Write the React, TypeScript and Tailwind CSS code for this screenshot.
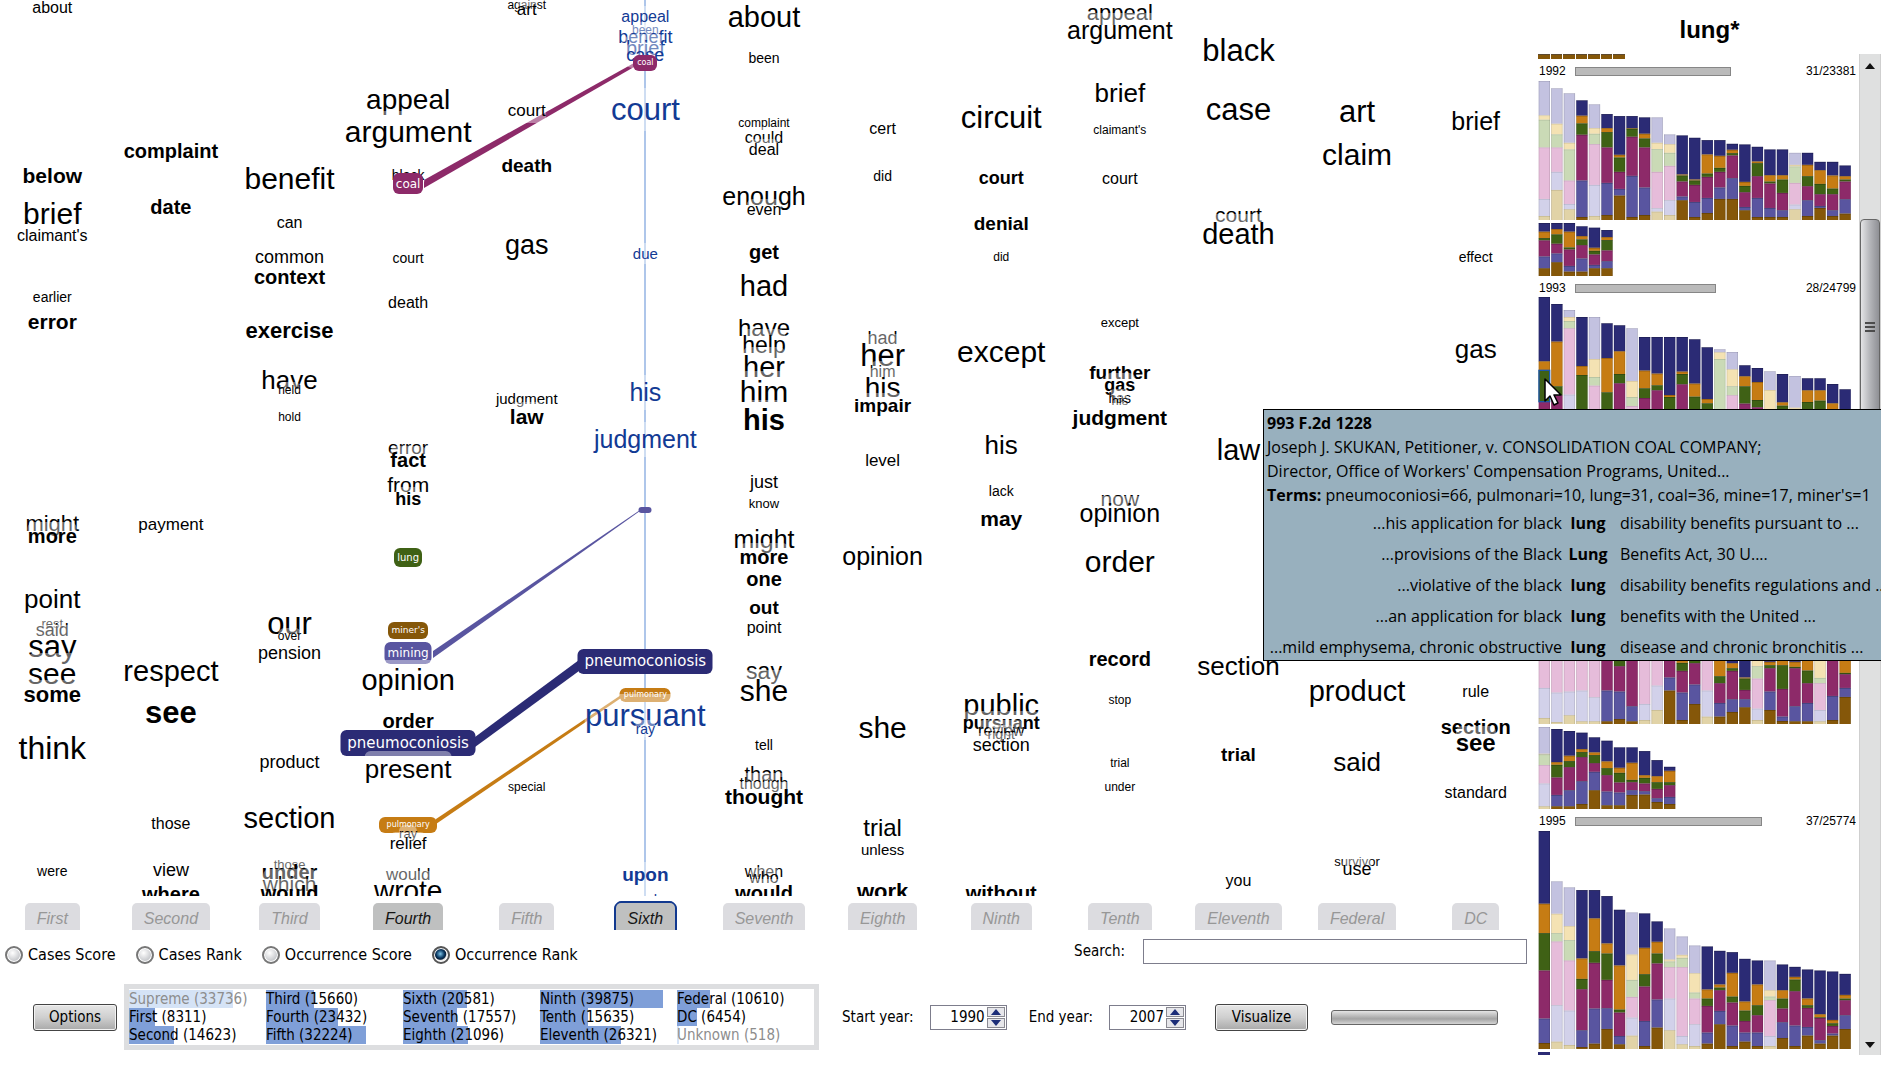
import React, { useState } from "react";

/* ---------- word columns ---------- */

type Word = { t: string; y: number; s: number; b?: boolean };
type Pill = { t: string; pill: string; y: number; w: number; h: number; s: number };
type Item = Word | Pill;

const w = (t: string, y: number, s: number): Word => ({ t, y, s });
const b = (t: string, y: number, s: number): Word => ({ t, y, s, b: true });
const p = (t: string, pill: string, y: number, wd: number, h: number, s: number): Pill => ({ t, pill, y, w: wd, h, s });

const MAGENTA = "bg-[#8d2a69]";
const GREEN = "bg-[#3f6115]";
const BROWN = "bg-[#855709]";
const VIOLET = "bg-[#5955a0]";
const NAVY = "bg-[#2b2b75]";
const ORANGE = "bg-[#c67c14]";

const columns: { name: string; state?: "on" | "active"; items: Item[] }[] = [
  {
    name: "First",
    items: [
      w("about", 13, 16), b("below", 183, 21), w("brief", 224, 30), w("claimant's", 241, 16), w("earlier", 302, 14),
      b("error", 329, 21), w("might", 532, 22), b("more", 543, 20), w("point", 608, 26), w("rest", 628, 13),
      w("said", 636, 18), w("say", 658, 31), w("see", 684, 30), b("some", 703, 22), w("think", 760, 32), w("were", 876, 14),
    ],
  },
  {
    name: "Second",
    items: [
      b("complaint", 158, 20), b("date", 214, 20), w("payment", 530, 17), w("respect", 681, 29), b("see", 724, 31),
      w("those", 829, 16), w("view", 876, 18), b("where", 901, 20),
    ],
  },
  {
    name: "Third",
    items: [
      w("benefit", 189, 30), w("can", 228, 16), w("common", 263, 18), b("context", 284, 20), b("exercise", 339, 22),
      w("have", 389, 26), w("held", 394, 12), w("hold", 421, 12), w("our", 635, 31), w("over", 640, 12),
      w("pension", 659, 18), w("product", 768, 18), w("section", 828, 29), w("those", 869, 13), b("under", 879, 20),
      w("which", 891, 21), b("would", 900, 20),
    ],
  },
  {
    name: "Fourth",
    state: "on",
    items: [
      w("appeal", 109, 28), w("argument", 142, 30), w("black", 180, 14), p("coal", MAGENTA, 173, 30, 21, 12),
      w("court", 263, 14), w("death", 308, 16), w("error", 455, 19), b("fact", 467, 20), w("from", 492, 21),
      b("his", 505, 18), p("lung", GREEN, 548, 28, 19, 10), p("miner's", BROWN, 622, 40, 17, 9),
      p("mining", VIOLET, 642, 47, 22, 12), w("opinion", 690, 29), b("order", 728, 20),
      p("pneumoconiosis", NAVY, 730, 135, 26, 15), w("present", 778, 26), p("pulmonary", ORANGE, 817, 58, 16, 8),
      w("ray", 838, 13), w("relief", 849, 17), w("would", 880, 17), w("wrote", 900, 28),
    ],
  },
  {
    name: "Fifth",
    items: [
      w("against", 9, 12), w("art", 15, 17), w("court", 116, 17), b("death", 173, 19), w("gas", 255, 27),
      w("judgment", 403, 15), b("law", 424, 21), w("special", 791, 12),
    ],
  },
  {
    name: "Sixth",
    state: "active",
    items: [
      w("appeal", 22, 16), w("been", 34, 12), w("benefit", 43, 18), w("brief", 55, 20), w("case", 61, 18),
      p("coal", MAGENTA, 55, 24, 16, 8), w("court", 121, 31), w("due", 258, 15), w("his", 401, 25),
      w("judgment", 448, 25), p("", VIOLET, 507, 13, 6, 8), p("pneumoconiosis", NAVY, 649, 135, 25, 15),
      p("pulmonary", ORANGE, 688, 51, 14, 8), w("pursuant", 727, 31), w("ray", 734, 14), b("upon", 882, 19),
      w("work", 904, 15),
    ],
  },
  {
    name: "Seventh",
    items: [
      w("about", 27, 29), w("been", 63, 14), w("complaint", 127, 12), w("could", 143, 16), w("deal", 155, 16),
      w("enough", 205, 25), w("even", 215, 16), b("get", 259, 20), w("had", 296, 29), w("have", 336, 24),
      w("help", 353, 23), w("her", 377, 29), w("him", 402, 30), b("his", 430, 29), w("just", 488, 18),
      w("know", 508, 13), w("might", 548, 25), b("more", 564, 20), b("one", 586, 20), b("out", 615, 19),
      w("point", 633, 16), w("say", 679, 23), w("she", 701, 30), w("tell", 750, 14), w("than", 781, 20),
      w("though", 789, 16), b("thought", 804, 21), w("when", 877, 16), w("who", 883, 16), b("would", 900, 20),
    ],
  },
  {
    name: "Eighth",
    items: [
      w("cert", 134, 16), w("did", 181, 14), w("had", 344, 18), w("her", 367, 31), w("him", 377, 16), w("his", 397, 28),
      b("impair", 413, 19), w("level", 466, 17), w("opinion", 565, 25), w("she", 738, 30), w("trial", 836, 24),
      w("unless", 854, 15), b("work", 900, 22),
    ],
  },
  {
    name: "Ninth",
    items: [
      w("circuit", 129, 31), b("court", 184, 18), b("denial", 231, 19), w("did", 261, 12), w("except", 362, 30),
      w("his", 454, 26), w("lack", 496, 14), b("may", 526, 21), w("public", 715, 29), b("pursuant", 729, 18),
      w("review", 736, 16), w("right", 739, 14), w("section", 751, 18), b("without", 900, 20),
    ],
  },
  {
    name: "Tenth",
    items: [
      w("appeal", 21, 22), w("argument", 39, 25), w("brief", 102, 26), w("claimant's", 134, 12), w("court", 184, 16),
      w("except", 327, 13), b("further", 380, 19), b("gas", 391, 18), w("has", 403, 14), w("his", 405, 13),
      b("judgment", 425, 21), w("now", 506, 21), w("opinion", 522, 25), w("order", 572, 30), b("record", 666, 20),
      w("stop", 704, 12), w("trial", 767, 12), w("under", 791, 12),
    ],
  },
  {
    name: "Eleventh",
    items: [
      w("black", 62, 31), w("case", 121, 31), w("court", 222, 21), w("death", 244, 29), w("law", 460, 29),
      w("section", 675, 26), b("trial", 762, 19), w("you", 886, 16),
    ],
  },
  {
    name: "Federal",
    items: [
      w("art", 123, 31), w("claim", 165, 30), w("product", 701, 29), w("said", 771, 26), w("survivor", 866, 13),
      w("use", 875, 18),
    ],
  },
  {
    name: "DC",
    items: [
      w("brief", 130, 25), w("effect", 262, 14), w("gas", 358, 26), w("rule", 697, 16), b("section", 734, 20),
      b("see", 751, 24), w("standard", 798, 16),
    ],
  },
];

function CloudItem({ item, blue }: { item: Item; blue: boolean }) {
  if ("pill" in item) {
    return (
      <span
        className={`absolute left-1/2 flex -translate-x-1/2 items-center justify-center rounded-md font-['DejaVu_Sans'] leading-none text-white ${item.pill}`}
        style={{ top: item.y, width: item.w, height: item.h, fontSize: item.s }}
      >
        {item.t}
      </span>
    );
  }
  const lead = item.s <= 18 ? 1 : 0;
  return (
    <span
      className={`absolute left-1/2 -translate-x-1/2 rounded-md bg-white/40 leading-[1.4] ${item.b ? "font-bold" : ""} ${blue ? "text-[#123a94]" : "text-black"}`}
      style={{ top: Math.round(item.y - item.s * 1.05) + lead, fontSize: item.s }}
    >
      {item.t}
    </span>
  );
}

function Connections() {
  return (
    <svg className="absolute inset-0 h-full w-full" viewBox="0 0 1542 896" preserveAspectRatio="none" aria-hidden="true">
      <rect x="651" y="0" width="2" height="896" fill="#aec6ea" />
      <polygon points="431,180 641,63 641,67 431,188" fill="#8d2a69" />
      <polygon points="440,651 647,510 647,511 440,658" fill="#5955a0" />
      <polygon points="482,737 586,660 586,671 482,747" fill="#2b2b75" />
      <polygon points="443,819 628,695 628,698 443,824" fill="#c67c14" />
    </svg>
  );
}

const tabStyle = {
  off: "bg-[#dcdce0] text-[#979797]",
  on: "bg-[#bfc0c0] text-[#151515]",
  active: "bg-[#bfc0c0] text-[#151515] shadow-[-2px_0_0_#12398f,2px_0_0_#12398f,0_-2px_0_#12398f,-1px_-1px_0_#12398f,1px_-1px_0_#12398f]",
};

/* ---------- bar charts ---------- */

type Bar = number[];
const F = 1;
const S = 0;

const solid = ["#2b2b75", "#c67c14", "#3f6115", "#8d2a69", "#5955a0", "#855709"];
const faint = ["#c3c2e0", "#f4e2b3", "#cadab6", "#e6bcda", "#d2d1ea", "#e1d3a7"];

/* Each bar: [faint?, tops of the six segments], three units to a pixel. */
const y1992a: Bar[] = [
  [F, 242, 345, 358, 441, 595, 646], [F, 264, 370, 402, 441, 514, 568], [F, 279, 427, 447, 540, 610, 626],
  [S, 300, 346, 369, 403, 540, 649], [F, 312, 383, 400, 431, 553, 646], [S, 341, 383, 395, 441, 547, 643],
  [S, 347, 463, 471, 514, 565, 585], [S, 347, 383, 385, 409, 526, 649], [S, 351, 400, 414, 441, 561, 643],
  [F, 351, 427, 446, 514, 623, 633], [F, 402, 431, 457, 496, 599, 643], [S, 405, 522, 525, 543, 588, 599],
  [S, 412, 537, 540, 553, 604, 649], [S, 419, 462, 519, 529, 592, 637], [S, 419, 466, 502, 514, 561, 595],
  [S, 430, 448, 458, 465, 533, 595], [S, 432, 544, 556, 575, 619, 629], [S, 439, 483, 488, 527, 592, 649],
  [S, 447, 524, 543, 549, 622, 649], [S, 447, 524, 537, 577, 629, 649], [F, 457, 493, 498, 547, 612, 626],
  [S, 457, 493, 527, 557, 599, 646], [S, 484, 509, 550, 581, 616, 622], [S, 484, 525, 564, 581, 629, 646],
  [S, 495, 527, 537, 543, 596, 639],
];
const y1992b: Bar[] = [
  [S, 669, 695, 714, 721, 769, 804], [S, 669, 687, 703, 731, 760, 786], [S, 669, 695, 742, 748, 797, 814],
  [S, 679, 708, 718, 735, 775, 814], [S, 683, 743, 752, 763, 794, 804], [S, 690, 711, 720, 751, 783, 804],
];
const y1993a: Bar[] = [
  [S, 891, 1084, 1110, 1204, 1290, 1350], [S, 912, 1025, 1159, 1186, 1290, 1350], [F, 930, 951, 963, 985, 1184, 1350],
  [S, 951, 1098, 1125, 1240, 1300, 1350], [F, 951, 1077, 1131, 1157, 1290, 1350], [S, 970, 1074, 1177, 1240, 1300, 1350],
  [S, 976, 1054, 1122, 1150, 1290, 1350], [F, 985, 1143, 1191, 1218, 1290, 1350], [S, 1011, 1112, 1165, 1194, 1290, 1350],
  [S, 1011, 1121, 1156, 1171, 1290, 1350], [S, 1011, 1185, 1191, 1240, 1300, 1350], [S, 1011, 1115, 1122, 1153, 1290, 1350],
  [S, 1018, 1151, 1190, 1240, 1300, 1350], [S, 1042, 1197, 1210, 1240, 1300, 1350], [F, 1048, 1057, 1077, 1240, 1300, 1350],
  [F, 1056, 1108, 1159, 1186, 1290, 1350], [S, 1096, 1129, 1159, 1211, 1290, 1350], [S, 1104, 1146, 1200, 1222, 1290, 1350],
  [F, 1114, 1170, 1240, 1260, 1300, 1350], [S, 1122, 1207, 1217, 1240, 1300, 1350], [F, 1128, 1223, 1240, 1260, 1300, 1350],
  [S, 1135, 1171, 1206, 1240, 1300, 1350], [S, 1135, 1171, 1202, 1240, 1300, 1350], [S, 1152, 1210, 1240, 1260, 1300, 1350],
  [S, 1168, 1240, 1250, 1270, 1300, 1350],
];
const y1993b: Bar[] = [
  [S, 0, 30, 50, 70, 110, 130], [S, 10, 40, 60, 80, 110, 130], [S, 20, 50, 60, 80, 110, 130],
];
const y1994a: Bar[] = [
  [F, 0, 140, 200, 250, 470, 560], [F, 20, 140, 200, 250, 484, 572], [F, 40, 140, 200, 250, 481, 552],
  [F, 50, 140, 200, 250, 478, 570], [F, 60, 140, 200, 250, 498, 570], [S, 80, 200, 250, 300, 478, 570],
  [S, 90, 200, 250, 405, 481, 563], [S, 100, 200, 250, 300, 525, 570], [F, 110, 200, 250, 300, 518, 566],
  [F, 120, 200, 250, 300, 463, 536], [S, 130, 200, 250, 300, 439, 478], [S, 140, 200, 395, 419, 484, 566],
  [S, 150, 200, 385, 396, 460, 518], [F, 160, 200, 250, 300, 478, 556], [S, 170, 250, 435, 456, 515, 556],
  [S, 180, 396, 411, 419, 504, 542], [S, 190, 439, 442, 476, 504, 528], [F, 200, 300, 405, 442, 532, 566],
  [S, 210, 392, 402, 411, 481, 536], [S, 220, 300, 402, 473, 556, 569], [S, 230, 392, 407, 411, 525, 570],
  [S, 240, 300, 418, 456, 515, 570], [F, 250, 300, 440, 456, 536, 570], [S, 260, 290, 320, 350, 494, 566],
  [S, 270, 300, 425, 429, 470, 497],
];
const y1994b: Bar[] = [
  [F, 232, 312, 314, 346, 401, 469], [S, 238, 337, 345, 383, 435, 469], [S, 244, 318, 334, 352, 421, 469],
  [S, 249, 298, 307, 322, 394, 462], [S, 263, 308, 316, 340, 366, 421], [S, 273, 335, 355, 376, 425, 466],
  [S, 293, 354, 369, 398, 428, 466], [S, 293, 339, 390, 397, 421, 435], [S, 304, 376, 384, 401, 424, 434],
  [S, 331, 379, 397, 417, 445, 456], [S, 351, 363, 397, 406, 441, 462],
];
const y1995a: Bar[] = [
  [S, 543, 761, 849, 961, 1105, 1178], [F, 694, 791, 849, 874, 1065, 1174], [F, 712, 828, 870, 931, 1081, 1184],
  [S, 720, 925, 986, 1017, 1140, 1190], [S, 720, 805, 903, 938, 1075, 1180], [S, 738, 880, 910, 989, 1074, 1136],
  [S, 779, 946, 1078, 1087, 1157, 1182], [F, 787, 913, 989, 1040, 1102, 1156], [S, 790, 893, 972, 1009, 1112, 1187],
  [S, 814, 875, 910, 940, 1048, 1132], [F, 835, 928, 934, 951, 1045, 1140], [F, 859, 914, 923, 951, 1157, 1182],
  [F, 886, 969, 1027, 1045, 1122, 1187], [S, 889, 1018, 1045, 1067, 1147, 1180], [S, 902, 1003, 1012, 1020, 1082, 1122],
  [S, 906, 968, 1039, 1057, 1126, 1187], [S, 926, 1054, 1081, 1112, 1147, 1174], [S, 931, 1003, 1065, 1095, 1147, 1187],
  [F, 931, 1020, 1039, 1050, 1157, 1187], [S, 943, 1020, 1045, 1075, 1116, 1163], [S, 950, 980, 988, 1023, 1126, 1187],
  [S, 958, 1045, 1065, 1073, 1130, 1156], [S, 961, 1092, 1101, 1103, 1170, 1180], [S, 964, 1109, 1119, 1127, 1150, 1156],
  [S, 971, 1034, 1045, 1050, 1095, 1136],
];

function Bars({ bars, base, top, className, marked }: { bars: Bar[]; base: number; top: number; className: string; marked?: boolean }) {
  return (
    <svg className={`block w-[314px] shrink-0 ${className}`} viewBox={`0 0 942 ${base - top}`} preserveAspectRatio="none" role="img" aria-label="Cases by term">
      {bars.map((bar, i) => {
        const colours = bar[0] === F ? faint : solid;
        const x = 2 + i * 37.6;
        return (
          <g key={i}>
            {colours.map((c, k) => {
              const y0 = bar[k + 1] - top;
              const y1 = (k === 5 ? base : bar[k + 2]) - top;
              return <rect key={k} x={x} y={y0} width="34" height={Math.max(0, y1 - y0)} fill={c} />;
            })}
            {bar.slice(1).map((y, k) => (
              <rect key={k} x={x} y={y - top} width="34" height="2" fill="#000" opacity={bar[0] === F ? 0.14 : 0.3} />
            ))}
            <rect x={x} y={bar[1] - top} width="2" height={base - bar[1]} fill="#000" opacity="0.15" />
            <rect x={x + 32} y={bar[1] - top} width="2" height={base - bar[1]} fill="#000" opacity="0.15" />
          </g>
        );
      })}
      {marked && <rect x="3" y="220" width="32" height="94" fill="none" stroke="#1c55a8" strokeWidth="4" />}
    </svg>
  );
}

function YearRow({ year, count, bar }: { year: string; count: string; bar: string }) {
  return (
    <div className="flex h-[9px] w-[318px] shrink-0 items-center text-xs leading-[9px] text-black">
      <span className="w-[37px] pl-px">{year}</span>
      <span className={`h-[9px] border border-[#868686] bg-[#bababa] ${bar}`} />
      <span className="ml-auto">{count}</span>
    </div>
  );
}

const snippets = [
  ["...his application for black", "lung", "disability benefits pursuant to ..."],
  ["...provisions of the Black", "Lung", "Benefits Act, 30 U...."],
  ["...violative of the black", "lung", "disability benefits regulations and ..."],
  ["...an application for black", "lung", "benefits with the United ..."],
  ["...mild emphysema, chronic obstructive", "lung", "disease and chronic bronchitis ..."],
];

function CaseTooltip() {
  return (
    <div
      role="tooltip"
      className="absolute top-[355px] right-0 -left-[275px] h-[252px] overflow-hidden border-y border-l border-black bg-[#98b0be] pl-[3px] font-['Open_Sans','Noto_Sans',sans-serif] text-base leading-6 whitespace-nowrap text-black"
    >
      <p className="pt-px font-bold">993 F.2d 1228</p>
      <p>Joseph J. SKUKAN, Petitioner, v. CONSOLIDATION COAL COMPANY;</p>
      <p>Director, Office of Workers' Compensation Programs, United...</p>
      <p>
        <b>Terms:</b> pneumoconiosi=66, pulmonari=10, lung=31, coal=36, mine=17, miner's=1
      </p>
      <ul>
        {snippets.map(([left, term, right]) => (
          <li key={left} className="flex h-[31px] items-center">
            <span className="flex w-[295px] shrink-0 justify-end">{left}</span>
            <b className="w-[52px] shrink-0 text-center">{term}</b>
            <span className="pl-[6px]">{right}</span>
          </li>
        ))}
      </ul>
    </div>
  );
}

function ScrollBar() {
  return (
    <div className="ml-auto flex w-[22px] flex-col items-center border-x border-[#cfcfcf] bg-[#dfe0e0]">
      <button type="button" aria-label="Scroll up" className="flex h-6 w-full shrink-0 items-center justify-center">
        <svg viewBox="0 0 10 6" className="h-[6px] w-[10px]"><path d="M0 6 5 0l5 6z" fill="#111" /></svg>
      </button>
      <div className="flex w-full grow flex-col pt-[141px]">
        <div className="flex h-[216px] w-full flex-col items-center justify-center gap-[2px] rounded-sm border border-[#666] bg-linear-to-r from-[#e4e4e6] via-[#b4b5b9] to-[#8f9095]">
          <span className="h-[2px] w-[10px] bg-[#4c4c4c]" />
          <span className="h-[2px] w-[10px] bg-[#4c4c4c]" />
          <span className="h-[2px] w-[10px] bg-[#4c4c4c]" />
        </div>
      </div>
      <button type="button" aria-label="Scroll down" className="flex h-5 w-full shrink-0 items-center justify-center">
        <svg viewBox="0 0 10 6" className="h-[6px] w-[10px]"><path d="M0 0h10L5 6z" fill="#111" /></svg>
      </button>
    </div>
  );
}

function TermPanel() {
  return (
    <aside className="relative z-10 flex w-[363px] shrink-0 flex-col pr-4 pl-1">
      <h1 className="flex h-[54px] items-center justify-center pt-[6px] text-2xl font-bold text-black">lung*</h1>
      <div className="relative flex h-[1001px]">
        <div className="flex flex-col overflow-hidden">
          <div className="grid h-[5px] w-[87px] shrink-0 grid-cols-7 gap-px">
            {[0, 1, 2, 3, 4, 5, 6].map((i) => (
              <span key={i} className="border-t border-[#5d4a30] bg-[#855709]" />
            ))}
          </div>
          <div className="h-2 shrink-0" />
          <YearRow year="1992" count="31/23381" bar="w-[156px]" />
          <Bars bars={y1992a} base={658} top={242} className="mt-[5px] h-[139px]" />
          <Bars bars={y1992b} base={827} top={669} className="mt-[3px] h-[53px]" />
          <div className="h-2 shrink-0" />
          <YearRow year="1993" count="28/24799" bar="w-[141px]" />
          <Bars bars={y1993a} base={1371} top={891} className="mt-[4px] h-[160px]" marked />
          <Bars bars={y1993b} base={150} top={0} className="mt-[3px] h-[50px]" />
          <div className="h-2 shrink-0" />
          <YearRow year="1994" count="36/25120" bar="w-[180px]" />
          <Bars bars={y1994a} base={578} top={0} className="mt-[4px] h-[193px]" />
          <Bars bars={y1994b} base={477} top={232} className="mt-[3px] h-[82px]" />
          <div className="h-2 shrink-0" />
          <YearRow year="1995" count="37/25774" bar="w-[187px]" />
          <Bars bars={y1995a} base={1196} top={543} className="mt-[5px] h-[218px]" />
          <div className="mt-[3px] h-[3px] w-3 shrink-0 bg-[#2b2b75]" />
        </div>
        <ScrollBar />
        <CaseTooltip />
        <svg className="absolute top-[324px] left-[6px] h-[29px] w-[20px]" viewBox="0 0 20 29" aria-hidden="true">
          <path d="M1 1v22l5-5 4 9 4-2-4-8h7z" fill="#fff" stroke="#000" strokeWidth="1.5" strokeLinejoin="round" />
        </svg>
      </div>
    </aside>
  );
}

/* ---------- controls ---------- */

const courts: [string, number, boolean?][] = [
  ["Supreme", 33736, true], ["First", 8311], ["Second", 14623],
  ["Third", 15660], ["Fourth", 23432], ["Fifth", 32224],
  ["Sixth", 20581], ["Seventh", 17557], ["Eighth", 21096],
  ["Ninth", 39875], ["Tenth", 15635], ["Eleventh", 26321],
  ["Federal", 10610], ["DC", 6454], ["Unknown", 518, true],
];

const modes = ["Cases Score", "Cases Rank", "Occurrence Score", "Occurrence Rank"];

const buttonClass =
  "h-[27px] shrink-0 rounded-[3px] border border-[#444] bg-linear-to-b from-[#e6e6e6] via-[#cfcfcf] via-50% to-[#a9a9a9] shadow-[inset_0_0_0_1px_#f2f2f2]";

function YearField({ id, label, value }: { id: string; label: string; value: number }) {
  const [year, setYear] = useState(value);
  return (
    <div className="flex shrink-0 items-center">
      <label htmlFor={id} className="mr-4 whitespace-nowrap">{label}</label>
      <div className="flex h-[25px] w-[77px] border border-[#7d7d8c] bg-white p-px">
        <input
          id={id}
          value={year}
          onChange={(e) => setYear(Number(e.target.value) || 0)}
          className="w-0 grow bg-transparent pr-[2px] text-right outline-none"
        />
        <div className="flex w-[18px] flex-col gap-px">
          <button type="button" aria-label={`${label} up`} onClick={() => setYear(year + 1)} className="flex grow items-center justify-center border border-[#8a8a92] bg-[#e6e6ea]">
            <svg viewBox="0 0 10 6" className="h-[6px] w-[10px]"><path d="M0 6 5 0l5 6z" fill="#1c2d78" /></svg>
          </button>
          <button type="button" aria-label={`${label} down`} onClick={() => setYear(year - 1)} className="flex grow items-center justify-center border border-[#8a8a92] bg-[#e6e6ea]">
            <svg viewBox="0 0 10 6" className="h-[6px] w-[10px]"><path d="M0 0h10L5 6z" fill="#1c2d78" /></svg>
          </button>
        </div>
      </div>
    </div>
  );
}

function Controls() {
  const [mode, setMode] = useState("Occurrence Rank");
  return (
    <div className="font-['DejaVu_Sans_Condensed','DejaVu_Sans',sans-serif] text-[15px] text-black">
      <div className="mt-[9px] flex h-[25px] items-center pr-[7px] pl-[5px]">
        <div className="flex gap-5 pt-[6px] text-base">
          {modes.map((m) => (
            <label key={m} className="flex items-center gap-[5px] whitespace-nowrap">
              <input
                type="radio"
                name="mode"
                checked={mode === m}
                onChange={() => setMode(m)}
                className="h-[18px] w-[18px] appearance-none rounded-full border-2 border-[#777] bg-[radial-gradient(circle_at_40%_35%,#fff,#c2c4c8_70%)] shadow-[inset_0_0_0_1px_#fff] checked:border-[#555] checked:bg-[radial-gradient(circle_at_45%_42%,#7fc4e8,#0c3c66_35%,#061f3c_48%,#e8e8e8_58%)]"
              />
              {m}
            </label>
          ))}
        </div>
        <label htmlFor="search" className="mr-[18px] ml-auto">Search:</label>
        <input id="search" type="text" className="h-[25px] w-[384px] border border-[#7d7d8c] bg-white px-1 outline-none" />
      </div>

      <div className="mt-5 flex items-center pr-9 pl-[33px]">
        <button type="button" className={`${buttonClass} w-[84px]`}>Options</button>
        <ul className="ml-[7px] grid grow grid-flow-col grid-cols-5 grid-rows-3 border-[5px] border-[#dddee0] py-px leading-[18px]">
          {courts.map(([name, count, dim]) => (
            <li key={name} className={`relative h-[18px] whitespace-nowrap ${dim ? "text-[#8d8d8d]" : ""}`}>
              <span
                className={`absolute inset-y-0 left-0 ${dim ? "bg-[#d5e3f6]" : "bg-[#7f9fd8]"}`}
                style={{ width: `${(count / 39875) * 90}%` }}
              />
              <span className="relative">{`${name} (${count})`}</span>
            </li>
          ))}
        </ul>
        <div className="ml-[23px] flex items-center gap-[22px]">
          <YearField id="start" label="Start year:" value={1990} />
          <YearField id="end" label="End year:" value={2007} />
        </div>
        <button type="button" className={`${buttonClass} ml-[29px] w-[93px]`}>Visualize</button>
        <div
          role="progressbar"
          aria-label="Progress"
          className="ml-[23px] h-[15px] w-[167px] shrink-0 rounded-[3px] border border-[#666] bg-linear-to-b from-[#e4e4e4] via-[#a4a4a4] via-60% to-[#d4d4d4]"
        />
      </div>
    </div>
  );
}

export default function App() {
  return (
    <main className="flex min-h-screen overflow-hidden bg-white font-['Liberation_Sans',Arial,sans-serif]">
      <section className="min-w-0 grow overflow-hidden">
        <div className="relative -mr-px -ml-[7px] grid h-[896px] grid-cols-13 overflow-hidden">
          <Connections />
          {columns.map((c) => (
            <div key={c.name} className="relative">
              {c.items.map((item, i) => (
                <CloudItem key={i} item={item} blue={c.state === "active"} />
              ))}
            </div>
          ))}
        </div>
        <div className="mt-[7px] -mr-px -ml-[7px] grid grid-cols-13 justify-items-center">
          {columns.map((c) => (
            <button key={c.name} type="button" className={`h-[27px] rounded-t-[5px] px-3 pt-1 text-base leading-none italic ${tabStyle[c.state ?? "off"]}`}>
              {c.name}
            </button>
          ))}
        </div>
        <Controls />
      </section>
      <TermPanel />
    </main>
  );
}
